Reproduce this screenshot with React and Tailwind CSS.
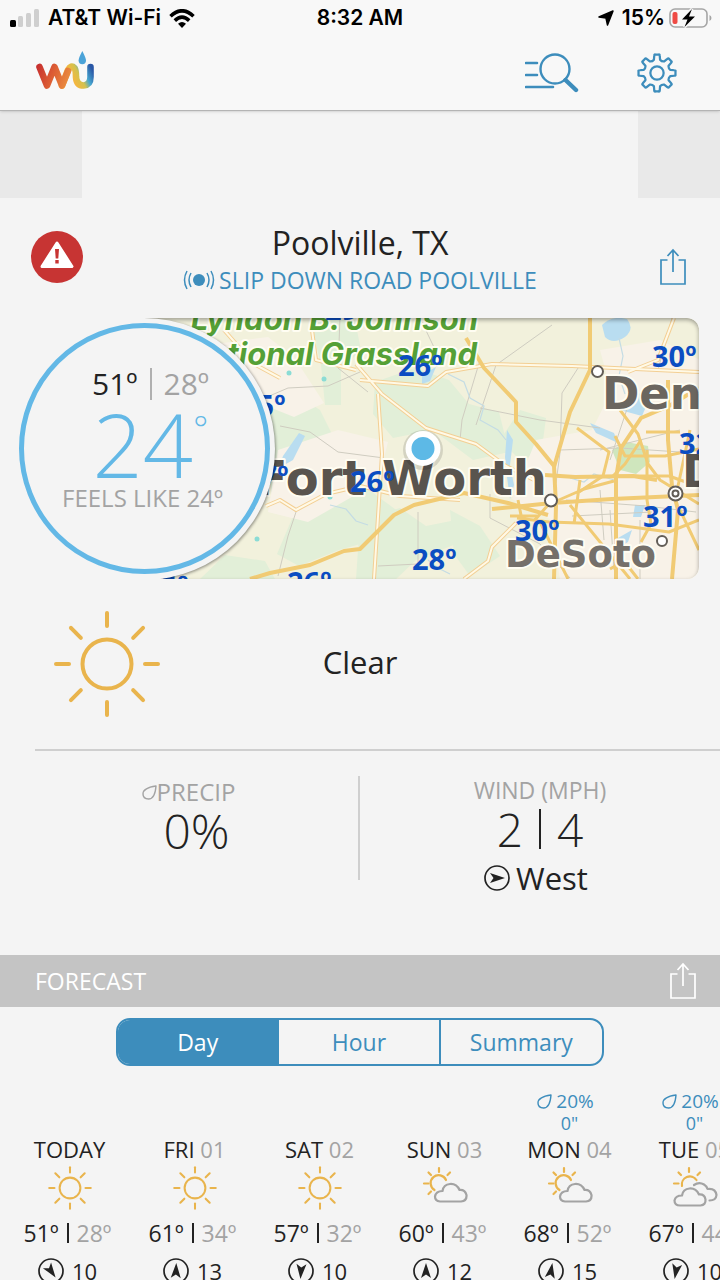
const days = [
  { name: 'TODAY', date: '', sky: 'sun', high: 51, low: 28, wind: 10, dir: 145 },
  { name: 'FRI', date: '01', sky: 'sun', high: 61, low: 34, wind: 13, dir: 2 },
  { name: 'SAT', date: '02', sky: 'sun', high: 57, low: 32, wind: 10, dir: 184 },
  { name: 'SUN', date: '03', sky: 'partly', high: 60, low: 43, wind: 12, dir: 0 },
  { name: 'MON', date: '04', sky: 'partly', high: 68, low: 52, wind: 15, dir: 10, rain: '20%', amount: '0"' },
  { name: 'TUE', date: '05', sky: 'mostly', high: 67, low: 44, wind: 10, dir: 190, rain: '20%', amount: '0"' },
];

const tabs = ['Day', 'Hour', 'Summary'];

const rays = [0, 45, 90, 135, 180, 225, 270, 315];

const point = (radius, deg) => {
  const a = (deg * Math.PI) / 180;
  return `${(radius * Math.cos(a)).toFixed(2)} ${(radius * Math.sin(a)).toFixed(2)}`;
};

const gearPath =
  rays
    .map(
      (deg, i) =>
        `${i === 0 ? 'M' : 'L'}${point(14, deg - 13)} L${point(18, deg - 9)} Q${point(19.6, deg - 8)} ${point(19, deg - 5)} L${point(19, deg + 5)} Q${point(19.6, deg + 8)} ${point(18, deg + 9)} L${point(14, deg + 13)} Q${point(12.5, deg + 22.5)} ${point(14, deg + 32)}`
    )
    .join(' ') + 'Z';

function StatusBar() {
  return (
    <div className="grid h-9 grid-cols-3 items-center px-2 font-['Inter',sans-serif] text-[21px] font-semibold text-black">
      <div className="flex items-center gap-2 whitespace-nowrap">
        <svg width="32" height="18" viewBox="0 0 32 18" className="shrink-0">
          <rect x="2" y="11" width="6" height="7" rx="1.5" fill="#000" />
          <rect x="10" y="7" width="5" height="11" rx="1.5" fill="#cfcfcf" />
          <rect x="18" y="4" width="5" height="14" rx="1.5" fill="#cfcfcf" />
          <rect x="26" y="0" width="5" height="18" rx="1.5" fill="#cfcfcf" />
        </svg>
        <span>AT&amp;T Wi-Fi</span>
        <svg width="26" height="19" viewBox="0 0 26 19" className="shrink-0">
          <g fill="none" stroke="#000" strokeWidth="3.6">
            <path d="M1.5 7.2Q13-3.6 24.5 7.2" />
            <path d="M5.8 11.6Q13 4.8 20.2 11.6" />
          </g>
          <path d="M9 14.8Q13 11.2 17 14.8L13 19Z" fill="#000" />
        </svg>
      </div>
      <div className="text-center">8:32 AM</div>
      <div className="flex items-center justify-end">
        <svg width="16" height="16" viewBox="0 0 16 16" className="mr-2">
          <path d="M15 1L9.500 15L8 8L1 7Z" fill="#000" stroke="#000" strokeWidth="1.500" strokeLinejoin="round" />
        </svg>
        <span className="mr-1">15%</span>
        <svg width="43" height="20" viewBox="0 0 43 20">
          <rect x="1" y="1" width="37" height="18" rx="5" fill="none" stroke="#a5a5a5" strokeWidth="1.6" />
          <path d="M40.5 7q2 1 2 3t-2 3z" fill="#a5a5a5" />
          <rect x="3.5" y="4" width="5" height="12" rx="2" fill="#ef4b45" />
          <path d="M23 1L13 11.5H18.5L15.5 19L26 8.5H20Z" fill="#000" stroke="#f8f8f8" strokeWidth="3" paintOrder="stroke" />
        </svg>
      </div>
    </div>
  );
}

function Logo() {
  return (
    <svg width="60" height="42" viewBox="36 49 60 42" role="img" aria-label="Weather Underground">
      <defs>
        <linearGradient id="logoWarm" gradientUnits="userSpaceOnUse" x1="37" y1="66" x2="74" y2="80">
          <stop offset="0" stopColor="#c7302f" />
          <stop offset="0.45" stopColor="#dd5f35" />
          <stop offset="1" stopColor="#ee9a42" />
        </linearGradient>
        <linearGradient id="logoCup" gradientUnits="userSpaceOnUse" x1="74" y1="80" x2="93" y2="70">
          <stop offset="0" stopColor="#f4b740" />
          <stop offset="0.35" stopColor="#d3c24e" />
          <stop offset="0.6" stopColor="#48a8d0" />
          <stop offset="1" stopColor="#2a57a6" />
        </linearGradient>
      </defs>
      <g fill="none" strokeWidth="6.600" strokeLinecap="round" strokeLinejoin="round">
        <path d="M62 84.500L68 69Q71 63.500 74.500 67Q76 69 76 76Q76.500 84.500 83.500 84.500Q90.500 84 90.500 76V66" stroke="url(#logoCup)" />
        <path d="M39.500 66L47 84.500L54.500 66L62 84.500L68 70" stroke="url(#logoWarm)" />
      </g>
      <path d="M82.300 50Q86 57 86 59.500Q86 63.200 82.300 63.200T78.600 59.500Q78.600 57 82.300 50Z" fill="#4ba3d8" />
    </svg>
  );
}

function Header() {
  return (
    <header className="relative z-10 border-b border-[#b4b4b4] bg-[#f8f8f8] shadow-sm">
      <StatusBar />
      <div className="flex h-[74px] items-center justify-between pr-[43px] pl-9">
        <a href="#home" className="-mt-1">
          <Logo />
        </a>
        <div className="flex items-center gap-[58px]">
          <button type="button" aria-label="Search locations">
            <svg width="54" height="40" viewBox="0 0 54 40" fill="none" stroke="#3d8dbc" strokeLinecap="round">
              <path d="M1 10H12M1 22H12M1 34H28" strokeWidth="2.6" />
              <circle cx="30" cy="16" r="14.500" strokeWidth="2.4" />
              <path d="M40.500 27L51 37" strokeWidth="4.4" />
            </svg>
          </button>
          <button type="button" aria-label="Settings">
            <svg width="40" height="40" viewBox="-20.500 -20.500 41 41" fill="none" stroke="#3d8dbc" strokeWidth="2.300" strokeLinejoin="round">
              <path d={gearPath} />
              <circle r="6.800" />
            </svg>
          </button>
        </div>
      </div>
    </header>
  );
}

function ShareIcon() {
  return (
    <svg width="28" height="38" viewBox="0 0 28 38" fill="none" stroke="currentColor" strokeWidth="1.700">
      <path d="M8.500 12H2V36H26V12H19.500" />
      <path d="M14 24V2M8.500 8L14 2L19.500 8" />
    </svg>
  );
}

function DropIcon() {
  return (
    <svg width="15" height="15" viewBox="0 0 15 15" fill="none" stroke="currentColor" strokeWidth="1.400" strokeLinejoin="round">
      <path d="M14 1C13.500 8 12 14 6.500 14C3 14 1 11.800 1 9C1 4 7 2 14 1Z" />
    </svg>
  );
}

function WindIcon({ dir, className }) {
  return (
    <svg viewBox="-13 -13 26 26" className={className}>
      <circle r="12" fill="none" stroke="#222" strokeWidth="1.700" />
      <path d="M0 -8L5 7L0 3.500L-5 7Z" fill="#222" transform={`rotate(${dir})`} />
    </svg>
  );
}

function Sun({ className, thin }) {
  return (
    <svg viewBox="-54 -54 108 108" className={className} fill="none" stroke="#e9b44c" strokeLinecap="round" strokeWidth={thin ? 4 : 5}>
      <circle r={thin ? 24.5 : 25.5} />
      {rays.map((deg) => (
        <path key={deg} d={deg % 90 ? 'M0 -37V-51' : 'M0 -38V-51'} transform={`rotate(${deg})`} />
      ))}
    </svg>
  );
}

function CloudySun({ double }) {
  return (
    <svg width="46" height="44" viewBox="0 0 46 44" fill="none" strokeWidth="2.200" strokeLinecap="round" strokeLinejoin="round">
      <g stroke="#e9b44c">
        <path d="M17 2V6M2 17.500H6.500M6.500 6.500L9 9M25.500 9L28 6.500" />
        {!double && <path d="M6.500 28L9 25.500" />}
        <path d={double ? 'M10 20A8 8 0 0 1 24.500 14' : 'M12.500 24A8 8 0 1 1 24 14'} />
      </g>
      {double ? (
        <g stroke="#a3a3a3">
          <path d="M22 19Q27 15.500 32 18.500Q34.500 20 35.500 23Q43.500 22 44.500 29Q44 34.500 37.500 34.500" />
          <path d="M8 39.500H28.500Q34 39 33.500 33.500Q32.500 28 27 28.500Q24 22 17.500 22.500Q11 23 10 29.500Q3.500 29.500 2.500 34.500Q2.500 39.500 8 39.500Z" />
        </g>
      ) : (
        <path d="M18 35.500H39Q45 35 44.500 29Q43 23.500 37.500 24Q34.500 17.500 28 18Q21.500 18.500 20.500 25Q14 25 13 30.500Q13 35 18 35.500Z" stroke="#a3a3a3" />
      )}
    </svg>
  );
}

function SkyIcon({ sky }) {
  if (sky === 'sun') return <Sun className="size-11" />;
  return <CloudySun double={sky === 'mostly'} />;
}

function RadarMap() {
  return (
    <svg viewBox="144 318 555 261" preserveAspectRatio="xMaxYMid slice" className="absolute inset-0 size-full">
      <rect x="144" y="318" width="555" height="261" fill="#f2f1dc" />
      <g fill="#e2efd8">
        <path d="M260 420l30-30 30 20 20 40-20 25-30-10-20 30-20-20z" />
        <path d="M294 514l35-18 40-6 30 22-10 24-50 14-40 16-22-12z" />
        <path d="M200 579l25-24 40 6 10 18z" />
        <path d="M310 320l45 0 6 30-20 20 0 35-16 0-4-40z" />
        <path d="M375 382l40-14 34 12 20 24 30 8 10 40-36 8-40-30-40 8-20-24z" />
        <path d="M360 520l40-12 26 18 30-6 10 20-50 20-20 19-40 0z" />
        <path d="M450 510l30 16 20 30-30 20-16-22z" />
        <path d="M500 440l20-30 26 8-4 30-20 14z" />
        <path d="M584 480l30-14 32 6-10 18-40 8z" />
      </g>
      <g fill="#f8f2e8">
        <path d="M208 345l60-8 26 20 30 46-30 14-50-20z" />
        <path d="M278 450l60-20 50 12-10 40-70 40-40-10z" />
        <path d="M536 440l56-10 20-40 87-20V579H560l-10-60-38-20z" />
        <path d="M600 350l60-10 40 20v60l-80 4z" />
      </g>
      <g fill="#b9ddf0">
        <path d="M602 325q10-10 25-6q8 10-2 18q-12 8-20 0z" />
        <path d="M507 430l6 10-3 25 4 20-4 14-3-22-2-20z" />
        <path d="M590 423l24 10 4 10-22-10z" />
        <path d="M620 410l18-18 10 10-6 14z" />
        <path d="M299 433l6 3-12 24-14 8 4-12z" />
        <path d="M618 538l14-8-4 12-10 6zM635 505l10 0-4 12-8 0z" />
        <path d="M422 375l14-8-6 14-8 3z" />
      </g>
      <path d="M612 450l14-8 22 4 2 16-14 12-16-4z" fill="#cfe6bd" />
      <g fill="none" stroke="#cfccc0" strokeWidth="1">
        <path d="M260 400l28-12 40-2 32-14M340 318l-2 50 30 24M280 426l30 6 28 20 46 6M296 512l-8 24-10 40" />
        <path d="M480 360l-18 60-2 20M552 325l-56 40-20 60M580 365l-18 28-2 60-4 30M480 408l60 12 60 8M420 318l22 46" />
        <path d="M418 512v52l-40 2M490 494v24l50 26 30 34M560 450l60-2 60 4M566 500l80 6 50 6M640 520v59M610 510l4 60M672 318l-14 52" />
        <path d="M572 516l80-4M600 490l4 50M680 430l-80 20M630 400l-20 60" />
      </g>
      <g fill="none" stroke="#c4dce4" strokeWidth="1.200">
        <path d="M448 374l16 8 6 16 14 8-4 14 18 10 8 10M619 338l4 18-4 20 6 18M330 505l16 4 10 12 12 4M428 560l10 8 12 6M570 478l14 4 10-8 20 6" />
      </g>
      <g fill="none" strokeLinejoin="round">
        <g stroke="#f3cf94" strokeWidth="4">
          <path d="M224 330l30 34 26 14M266 506l14-6 16 10 30-16 34-8 40 10 60 4" />
          <path d="M360 380l68 6 18-14 46-8 80 2 127 6M356 364l26 30 44 34 50 16 30 22 36 18M378 394l4 60-8 125" />
          <path d="M464 579l24-18 4-14 24-24M674 318l-16 42-30 12M312 330l4 30 40 10" />
        </g>
        <g stroke="#fff9e6" strokeWidth="2">
          <path d="M224 330l30 34 26 14M266 506l14-6 16 10 30-16 34-8 40 10 60 4" />
          <path d="M360 380l68 6 18-14 46-8 80 2 127 6M356 364l26 30 44 34 50 16 30 22 36 18M378 394l4 60-8 125" />
          <path d="M464 579l24-18 4-14 24-24M674 318l-16 42-30 12M312 330l4 30 40 10" />
        </g>
        <g stroke="#f1cb74" strokeWidth="4">
          <path d="M250 579l20-6 40-8 34-14 16-2 34-34 20-10 50-12 44 10 40 12" />
          <path d="M466 338l18 30 32 34 0 20 20 22 18 22 2 40-2 73M590 318v52l-20 42-16 55" />
          <path d="M492 509l60-6 60-4 87-4M545 475l30 2 58-1 24 4" />
          <path d="M668 380v60l4 46 6 24-6 69M699 388l-30 18-28 12-20 30-5 30 0 101" />
        </g>
        <g stroke="#f1cb74" strokeWidth="3">
          <path d="M577 428l32 24-6 24-24 16M620 410l18 24 10 30 12 16 39 24M615 436l10 20 40 0 34-7" />
          <path d="M641 440l-16 24-12 12h56l28 10M646 432h34M647 450v50l4 24-10 18" />
          <path d="M699 520l-30 12-60-8-60-2-32-4M510 516l28 0M548 505l-14 16M552 503l32-14 30-8M518 500l4 20M580 480l-6 44" />
          <path d="M570 505l60 74M540 522l28 57M610 569l14-8 14 18M680 510l19 40M690 430l-12 56" />
        </g>
      </g>
      <g fill="#8bdcd5">
        <circle cx="289" cy="373" r="2.500" />
        <circle cx="324" cy="379" r="2.500" />
        <circle cx="257" cy="539" r="2.500" />
        <circle cx="330" cy="497" r="2.500" />
      </g>
      <g stroke="#fffdf2" strokeWidth="4" strokeLinejoin="round" paintOrder="stroke">
        <g fill="#55a036" fontFamily="Inter, sans-serif" fontSize="31" fontWeight="700" fontStyle="italic" textAnchor="end">
          <text x="478" y="330">Lyndon B. Johnson</text>
          <text x="477" y="365">National Grassland</text>
        </g>
        <g fontFamily="'DejaVu Sans', sans-serif" fontWeight="700">
          <text x="547" y="495" fontSize="48" textAnchor="end" fill="#59544e">Fort Worth</text>
          <text x="602" y="409" fontSize="45" fill="#6b665f">Denton</text>
          <text x="682" y="487" fontSize="45" fill="#59544e">Dallas</text>
          <text x="656" y="567" fontSize="37" textAnchor="end" fill="#75706a">DeSoto</text>
        </g>
      </g>
      <g fill="#fff" stroke="#625d57" strokeWidth="2">
        <circle cx="597.500" cy="371.500" r="5.500" />
        <circle cx="551" cy="500.500" r="6" />
        <circle cx="662" cy="541" r="5" />
        <circle cx="675.500" cy="493.500" r="7" />
        <circle cx="675.500" cy="493.500" r="3" />
      </g>
      <g fontFamily="'Open Sans', sans-serif" fontSize="29" fontWeight="700" fill="#0b4dc2">
        <text x="325" y="320">29º</text>
        <text x="398" y="376">26º</text>
        <text x="652" y="367">30º</text>
        <text x="241" y="416">25º</text>
        <text x="244" y="487">27º</text>
        <text x="350" y="492">26º</text>
        <text x="679" y="454">32º</text>
        <text x="643" y="527">31º</text>
        <text x="515" y="541">30º</text>
        <text x="412" y="570">28º</text>
        <text x="287" y="593">26º</text>
        <text x="144" y="597">25º</text>
      </g>
      <circle cx="423" cy="450" r="20" fill="#000" opacity="0.120" />
      <circle cx="423" cy="448.500" r="14.500" fill="#5db9e6" stroke="#fff" strokeWidth="6" />
    </svg>
  );
}

function Current() {
  return (
    <section className="relative pr-[21px] pl-36">
      <div className="relative h-[261px] overflow-hidden rounded-r-xl">
        <RadarMap />
        <div className="absolute inset-0 rounded-r-xl shadow-[inset_0_2px_4px_rgba(0,0,0,0.35)]" />
        <div className="absolute top-0 -left-[131px] size-[262px] rounded-full bg-[#f4f4f4] shadow-[1px_1px_3px_rgba(0,0,0,0.4)]" />
      </div>
      <div className="absolute top-[5px] left-[19px] flex size-[251px] flex-col items-center rounded-full border-[5px] border-[#63b8e6] pt-10">
        <div className="flex items-center gap-3 pl-3 text-3xl leading-8">
          <span>51º</span>
          <span className="h-8 w-0.5 bg-[#b0b0b0]" />
          <span className="text-[#a3a3a3]">28º</span>
        </div>
        <div className="flex pr-1 text-[88px] leading-[88px] font-light text-[#63b8e6]">
          24<span className="-mr-4 text-4xl leading-[58px]">°</span>
        </div>
        <div className="-mt-1 pr-1 text-2xl leading-7 text-[#a3a3a3]">FEELS LIKE 24º</div>
      </div>
    </section>
  );
}

function Forecast() {
  return (
    <section>
      <div className="flex h-[52px] items-center justify-between bg-[#c4c4c4] pr-[23px] pl-[35px] text-white">
        <h2 className="text-[23px]">FORECAST</h2>
        <button type="button" aria-label="Share forecast">
          <ShareIcon />
        </button>
      </div>
      <div className="mx-[116px] mt-[11px] grid h-12 grid-cols-3 divide-x-2 divide-[#3d8dbc] overflow-hidden rounded-[14px] border-2 border-[#3d8dbc] text-[23px]">
        {tabs.map((tab, index) => (
          <button
            key={tab}
            type="button"
            aria-pressed={index === 0}
            className={index === 0 ? 'bg-[#3d8dbc] text-white' : 'text-[#3d8dbc]'}
          >
            {tab}
          </button>
        ))}
      </div>
      <div className="mt-6 flex overflow-hidden pl-[7px]">
        {days.map((day) => (
          <div key={day.name} className="flex w-[125px] shrink-0 flex-col items-center whitespace-nowrap">
            <div className="h-[45px] text-center text-lg leading-[22px] text-[#3d8dbc]">
              {day.rain && (
                <>
                  <div className="flex items-center gap-1 pr-2 text-[19px]">
                    <DropIcon />
                    {day.rain}
                  </div>
                  <div>{day.amount}</div>
                </>
              )}
            </div>
            <div className="text-[22px] leading-7">
              {day.name} <span className="text-[#a3a3a3]">{day.date}</span>
            </div>
            <div className="flex h-12 items-center pt-0.5">
              <SkyIcon sky={day.sky} />
            </div>
            <div className="mt-2 flex items-center gap-2 pr-1 text-[23px] leading-7">
              <span>{day.high}º</span>
              <span className="h-5 w-0.5 bg-[#222]" />
              <span className="text-[#a3a3a3]">{day.low}º</span>
            </div>
            <div className="mt-2 flex items-center gap-2 pt-0.5 pr-1 text-[22px] leading-7">
              <WindIcon dir={day.dir} className="size-[26px]" />
              {day.wind}
            </div>
          </div>
        ))}
      </div>
    </section>
  );
}

export default function App() {
  return (
    <div className="h-screen overflow-hidden bg-[#f4f4f4] font-['Open_Sans','Noto_Sans',sans-serif] text-[#222]">
      <Header />
      <div className="flex h-[87px] justify-between">
        <div className="w-[82px] bg-[#e9e9e9]" />
        <div className="w-[82px] bg-[#e9e9e9]" />
      </div>

      <section className="grid h-[120px] grid-cols-[52px_1fr_50px] items-start pr-[33px] pl-[31px]">
        <button type="button" aria-label="Weather alert" className="mt-[33px]">
          <svg width="52" height="52" viewBox="0 0 52 52">
            <circle cx="26" cy="26" r="26" fill="#c73433" />
            <path d="M26 12L41 35.500H11Z" fill="#fff" stroke="#fff" strokeWidth="3" strokeLinejoin="round" />
            <path d="M24 18H28L27.300 27.500H24.700ZM24.300 29H27.700V32.500H24.300Z" fill="#c73433" />
          </svg>
        </button>
        <div className="mt-6 flex flex-col items-center">
          <h1 className="text-[32px] leading-[42px]">Poolville, TX</h1>
          <a href="#station" className="flex items-center gap-1 text-[23px] leading-8 whitespace-nowrap text-[#3d8dbc]">
            <svg width="32" height="20" viewBox="0 0 32 20" fill="none" stroke="currentColor" strokeWidth="1.500">
              <circle cx="16" cy="10" r="6" fill="currentColor" stroke="none" />
              <path d="M8 3Q4 10 8 17M24 3Q28 10 24 17M4 1Q-1 10 4 19M28 1Q33 10 28 19" />
            </svg>
            SLIP DOWN ROAD POOLVILLE
          </a>
        </div>
        <button type="button" aria-label="Share conditions" className="mt-[50px] justify-self-end text-[#3d8dbc]">
          <ShareIcon />
        </button>
      </section>

      <Current />

      <section className="grid h-[170px] grid-cols-[1fr_auto_1fr] items-center px-[53px]">
        <Sun className="size-[108px]" thin />
        <div className="pb-1 text-[31px]">Clear</div>
      </section>

      <section className="ml-[35px] h-[206px] border-t-2 border-[#cfcfcf] pt-[25px]">
        <div className="-ml-[35px] grid grid-cols-2">
          <div className="flex h-[104px] flex-col items-center border-r-2 border-[#cfcfcf] pl-[35px]">
            <div className="mt-0.5 flex items-center pr-4 text-2xl leading-7 text-[#a3a3a3]">
              <DropIcon />
              PRECIP
            </div>
            <div className="text-[48px] leading-[50px] font-light">0%</div>
          </div>
          <div className="flex flex-col items-center">
            <div className="text-[23px] leading-7 text-[#a3a3a3]">WIND (MPH)</div>
            <div className="flex items-center gap-4 text-[46px] leading-[50px] font-light">
              <span>2</span>
              <span className="h-10 w-0.5 bg-[#222]" />
              <span>4</span>
            </div>
            <div className="flex items-center gap-1.5 pt-1 pr-2 text-[31px] leading-10">
              <WindIcon dir={90} className="size-[26px]" />
              West
            </div>
          </div>
        </div>
      </section>

      <Forecast />
    </div>
  );
}
